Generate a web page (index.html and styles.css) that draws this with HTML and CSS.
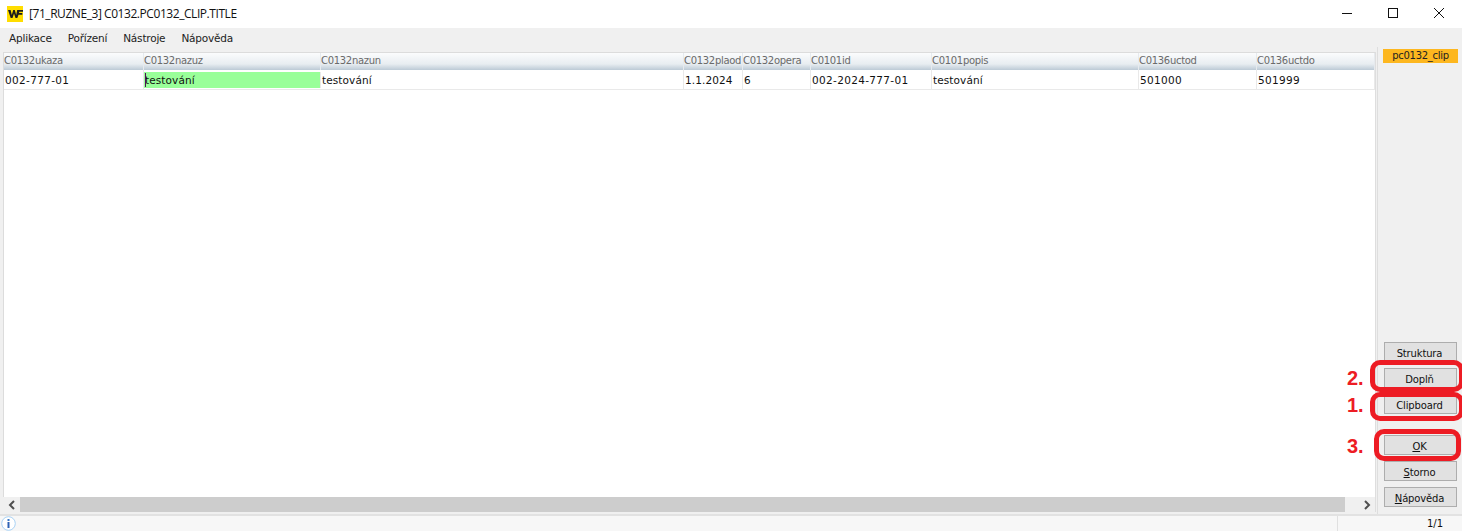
FILE: index.html
```html
<!DOCTYPE html>
<html lang="cs">
<head>
<meta charset="utf-8">
<title>C0132.PC0132_CLIP.TITLE</title>
<link rel="stylesheet" href="styles.css">
</head>
<body>
<div class="app">
  <header class="titlebar">
    <div class="titleleft">
      <svg class="logo" width="16" height="16" viewBox="0 0 16 16"><rect width="16" height="16" fill="#ffdd00"/><path d="M1 4h2.600l1.200 5 1.400-5h1.600l1.400 5 1-5H16v1.800h-3.700l-.3 1.200h3.300v1.700h-3.800L10.300 12H8.500L7 7.500 5.500 12H3.700z" fill="#1c1c1c"/></svg>
      <span class="titletext">[71_RUZNE_3] C0132.PC0132_CLIP.TITLE</span>
    </div>
    <div class="winctrls">
      <svg width="12" height="12" viewBox="0 0 12 12"><path d="M1 6.500h10" stroke="#111" fill="none"/></svg>
      <svg width="12" height="12" viewBox="0 0 12 12"><rect x="1.500" y="1.500" width="9" height="9" stroke="#111" fill="none"/></svg>
      <svg width="12" height="12" viewBox="0 0 12 12"><path d="M1 1l10 10M11 1L1 11" stroke="#111" fill="none"/></svg>
    </div>
  </header>
  <nav class="menubar">
    <span class="menuitem">Aplikace</span>
    <span class="menuitem">Pořízení</span>
    <span class="menuitem">Nástroje</span>
    <span class="menuitem">Nápověda</span>
  </nav>
  <main class="content">
    <section class="gridpanel">
      <div class="griddata">
        <div class="gridrow headrow">
          <div class="cell">C0132ukaza</div><div class="cell">C0132nazuz</div><div class="cell">C0132nazun</div><div class="cell">C0132plaod</div><div class="cell">C0132opera</div><div class="cell">C0101id</div><div class="cell">C0101popis</div><div class="cell">C0136uctod</div><div class="cell">C0136uctdo</div>
        </div>
        <div class="gridrow datarow">
          <div class="cell digits">002-777-01</div><div class="cell active"><span class="caret"></span>testování</div><div class="cell">testování</div><div class="cell">1.1.2024</div><div class="cell">6</div><div class="cell digits">002-2024-777-01</div><div class="cell">testování</div><div class="cell digits">501000</div><div class="cell digits">501999</div>
        </div>
      </div>
      <div class="hscroll">
        <div class="sbtn"><svg width="8" height="10" viewBox="0 0 8 10"><path d="M6 1L2 5l4 4" stroke="#505050" stroke-width="2" fill="none"/></svg></div>
        <div class="thumb"></div>
        <div class="sbtn"><svg width="8" height="10" viewBox="0 0 8 10"><path d="M2 1l4 4-4 4" stroke="#505050" stroke-width="2" fill="none"/></svg></div>
      </div>
    </section>
    <aside class="sidepanel">
      <div class="tag">pc0132_clip</div>
      <div class="buttons">
        <button class="btn">Struktura</button>
        <button class="btn">Doplň</button>
        <button class="btn">Clipboard</button>
        <button class="btn okbtn"><u>O</u>K</button>
        <button class="btn"><u>S</u>torno</button>
        <button class="btn"><u>N</u>ápověda</button>
      </div>
    </aside>
  </main>
  <footer class="statusbar">
    <svg class="info" width="15" height="15" viewBox="0 0 15 15"><circle cx="7.500" cy="7.500" r="6.800" fill="#fff" stroke="#a9d2f5"/><rect x="6.500" y="3" width="2" height="2" fill="#3a78c8"/><rect x="6.500" y="6" width="2" height="6" fill="#2f62b5"/></svg>
    <div class="pagecount">1/1</div>
  </footer>
  <div class="mark m1"></div>
  <div class="mark m2"></div>
  <div class="mark m3"></div>
  <div class="num n2">2.</div>
  <div class="num n1">1.</div>
  <div class="num n3">3.</div>
</div>
</body>
</html>
```
FILE: styles.css
```css
* { box-sizing: border-box; }
html, body { margin: 0; padding: 0; height: 100%; overflow: hidden; }
body { font-family: "DejaVu Sans", sans-serif; background: #f0f0f0; color: #000; }
.app { position: relative; width: 1462px; height: 531px; display: flex; flex-direction: column; }
.titlebar { height: 28px; background: #fff; display: flex; justify-content: space-between; align-items: center; flex: none; }
.titleleft { display: flex; align-items: center; padding-left: 7px; gap: 6px; }
.logo { display: block; margin-top: -1px; }
.titletext { font: 12px "Open Sans", sans-serif; color: #111; letter-spacing: -.44px; position: relative; top: -1px; }
.winctrls { display: flex; gap: 34px; padding-right: 17px; margin-top: -3px; }
.winctrls svg { display: block; }
.menubar { height: 19px; flex: none; background: #f0f0f0; display: flex; padding-left: 9px; gap: 16px; align-items: center; font: 10.500px "DejaVu Sans", sans-serif; color: #222; letter-spacing: -.2px; }
.content { flex: 1; min-height: 0; display: flex; background: #f0f0f0; }
.gridpanel { width: 1373px; margin: 5px 0 2px 3px; background: #fff; display: flex; flex-direction: column; flex: none; border-right: 1px solid #dedede; }
.griddata { flex: 1; border-left: 1px solid #dcdcdc; border-top: 1px solid #dcdcdc; }
.gridrow { display: grid; grid-template-columns: 140px 177px 363px 59px 68px 121px 207px 118px 118px; }
.headrow { height: 17px; background: linear-gradient(#fbfcfd, #e8edf1 65%, #bccad6); font-size: 10px; letter-spacing: -.3px; color: #6a6a6a; }
.headrow .cell { line-height: 15px; border-right: 1px solid #e6eaee; }
.datarow { height: 20px; border-bottom: 1px solid #e9e9e9; font-size: 10.500px; color: #111; letter-spacing: .1px; }
.datarow .cell { line-height: 20px; padding-left: 1px; border-right: 1px solid #e9e9e9; position: relative; }
.datarow .digits { letter-spacing: .33px; }
.cell { white-space: nowrap; overflow: hidden; }
.datarow .active { background: #99ff99; margin: 2px 0 1px; line-height: 16px; padding-left: 1px; }
.caret { position: absolute; left: 1px; top: 1px; width: 1px; height: 14px; background: #50105a; }
.hscroll { height: 15px; flex: none; display: flex; background: #f0f0f0; }
.sbtn { width: 17px; flex: none; display: flex; align-items: center; justify-content: center; }
.thumb { width: 1325px; background: #cdcdcd; margin-right: auto; }
.sidepanel { flex: 1; display: flex; flex-direction: column; border-left: 1px solid #dedede; margin-left: 1px; padding: 2px 4px 7px 5px; align-items: stretch; }
.tag { height: 14px; background: #fdb71f; font-size: 10px; line-height: 14px; text-align: center; color: #222; letter-spacing: -.3px; }
.buttons { margin-top: auto; display: flex; flex-direction: column; gap: 6px; padding: 0 1px; }
.btn { height: 20px; padding: 2px 2px 0 0; background: #e1e1e1; border: 1px solid #adadad; font: 10px "DejaVu Sans", sans-serif; letter-spacing: -.15px; color: #111; }
.okbtn { margin-top: 15px; }
.statusbar { height: 17px; flex: none; background: #f7f7f7; border-top: 2px solid #e2e2e2; display: flex; align-items: center; justify-content: space-between; padding-left: 1px; }
.info { display: block; }
.pagecount { width: 125px; height: 100%; border-left: 1px solid #e0e0e0; text-align: right; padding-right: 19px; font-size: 10px; line-height: 16px; color: #111; }
.mark { position: absolute; border: 5px solid #ed1c24; border-radius: 10px; }
.m1 { left: 1370px; top: 360px; width: 94px; height: 32px; }
.m2 { left: 1370px; top: 392px; width: 94px; height: 29px; }
.m3 { left: 1374px; top: 429px; width: 87px; height: 32px; }
.num { position: absolute; font: bold 20px "Liberation Sans", sans-serif; color: #ed1c24; line-height: 22px; }
.n2 { left: 1347px; top: 367px; }
.n1 { left: 1347px; top: 394px; }
.n3 { left: 1347px; top: 435px; }
```
